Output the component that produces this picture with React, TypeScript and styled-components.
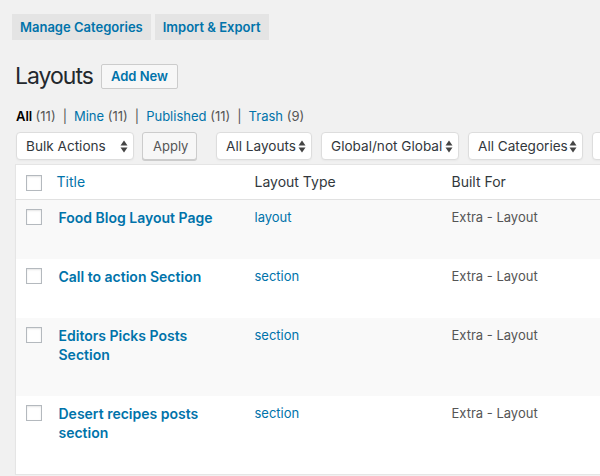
import React from 'react'
import styled, { createGlobalStyle } from 'styled-components'

const GlobalStyle = createGlobalStyle`
    html, body {
        margin: 0;
        padding: 0;
        background: #f1f1f1;
        overflow: hidden;
    }
    body {
        font-family: Inter, "Noto Sans", "Liberation Sans", sans-serif;
        color: #444;
        font-size: 13px;
        -webkit-font-smoothing: antialiased;
    }
`

const tabs = ['Manage Categories', 'Import & Export']

const statusLinks = [
    { label: 'All', count: 11, current: true },
    { label: 'Mine', count: 11 },
    { label: 'Published', count: 11 },
    { label: 'Trash', count: 9 },
]

// last filter runs off the right edge, only its border shows
const filters = [
    { label: 'All Layouts', width: 96 },
    { label: 'Global/not Global', width: 138 },
    { label: 'All Categories', width: 115 },
    { label: '', width: 100 },
]

const layouts = [
    { title: 'Food Blog Layout Page', type: 'layout', builtFor: 'Extra - Layout' },
    { title: 'Call to action Section', type: 'section', builtFor: 'Extra - Layout' },
    { title: 'Editors Picks Posts Section', type: 'section', builtFor: 'Extra - Layout' },
    { title: 'Desert recipes posts section', type: 'section', builtFor: 'Extra - Layout' },
]

function Arrows() {
    return (
        <svg width="8" height="13" viewBox="0 0 8 13">
            <path d="M4 0.5 L7.5 5.5 L0.5 5.5 Z" fill="#444" />
            <path d="M4 12.5 L7.5 7.5 L0.5 7.5 Z" fill="#444" />
        </svg>
    )
}

function App() {
    return (
        <>
            <GlobalStyle />
            <Wrap>
                <TabBar>
                    {tabs.map((t) => (
                        <Tab key={t}>{t}</Tab>
                    ))}
                </TabBar>

                <HeadingRow>
                    <Heading>Layouts</Heading>
                    <AddNew>Add New</AddNew>
                </HeadingRow>

                <Subsubsub>
                    {statusLinks.map((s, i) => (
                        <li key={s.label}>
                            <StatusLink $current={s.current}>
                                {s.label} <Count>({s.count})</Count>
                            </StatusLink>
                            {i < statusLinks.length - 1 && <Sep>|</Sep>}
                        </li>
                    ))}
                </Subsubsub>

                <Toolbar>
                    <ActionGroup $gap={8}>
                        <SelectBox $width={118}>
                            <span>Bulk Actions</span>
                            <Arrows />
                        </SelectBox>
                        <Button>Apply</Button>
                    </ActionGroup>
                    <ActionGroup $gap={9}>
                        {filters.map((f, i) => (
                            <SelectBox key={i} $width={f.width}>
                                <span>{f.label}</span>
                                <Arrows />
                            </SelectBox>
                        ))}
                    </ActionGroup>
                </Toolbar>

                <Table>
                    <colgroup>
                        <col style={{ width: 31 }} />
                        <col style={{ width: 198 }} />
                        <col style={{ width: 197 }} />
                        <col />
                    </colgroup>
                    <thead>
                        <tr>
                            <CheckCell as="td">
                                <Checkbox />
                            </CheckCell>
                            <Th $link>Title</Th>
                            <Th>Layout Type</Th>
                            <Th>Built For</Th>
                        </tr>
                    </thead>
                    <tbody>
                        {layouts.map((row, i) => (
                            <Row key={row.title} $alt={i % 2 === 0}>
                                <CheckCell>
                                    <Checkbox />
                                </CheckCell>
                                <Td>
                                    <RowTitle>{row.title}</RowTitle>
                                    <RowActions />
                                </Td>
                                <Td>
                                    <TypeLink>{row.type}</TypeLink>
                                </Td>
                                <Td>{row.builtFor}</Td>
                            </Row>
                        ))}
                    </tbody>
                </Table>
            </Wrap>
        </>
    )
}

export default App

const Wrap = styled.div`
    padding: 14px 0 0 15px;
    width: 900px;
`

const TabBar = styled.div`
    display: flex;
    gap: 4px;
    margin-left: -3px;
`

const Tab = styled.a`
    display: block;
    height: 26px;
    line-height: 26px;
    padding: 0 8px;
    background: #e4e4e4;
    color: #0073aa;
    font-weight: 600;
    font-size: 13px;
`

const HeadingRow = styled.div`
    display: flex;
    align-items: center;
    gap: 8px;
    margin-top: 24px;
    height: 25px;
`

const Heading = styled.h1`
    margin: 0;
    font-size: 23px;
    font-weight: 400;
    letter-spacing: -1px;
    color: #23282d;
    line-height: 29px;
`

const AddNew = styled.a`
    display: block;
    box-sizing: border-box;
    height: 25px;
    line-height: 23px;
    padding: 0 9px;
    border: 1px solid #ccc;
    border-radius: 2px;
    background: #f7f7f7;
    color: #0073aa;
    font-weight: 600;
    font-size: 13px;
`

const Subsubsub = styled.ul`
    display: flex;
    list-style: none;
    margin: 19px 0 0 1px;
    padding: 0;
    font-size: 13px;
    line-height: 16px;
    color: #666;
`

const StatusLink = styled.a<{ $current?: boolean }>`
    color: ${({ $current }) => ($current ? '#000' : '#0073aa')};
    font-weight: ${({ $current }) => ($current ? 600 : 400)};
`

const Count = styled.span`
    color: #555;
    font-weight: 400;
`

const Sep = styled.span`
    color: #555;
    padding: 0 7px;
`

const Toolbar = styled.div`
    display: flex;
    gap: 19px;
    margin: 8px 0 0 1px;
    height: 28px;
`

const ActionGroup = styled.div<{ $gap: number }>`
    display: flex;
    gap: ${({ $gap }) => $gap}px;
`

const SelectBox = styled.div<{ $width: number }>`
    box-sizing: border-box;
    width: ${({ $width }) => $width}px;
    height: 28px;
    display: flex;
    align-items: center;
    justify-content: space-between;
    padding: 0 5px 0 9px;
    background: #fff;
    border: 1px solid #ddd;
    border-radius: 4px;
    box-shadow: 0 1px 2px rgba(0, 0, 0, 0.04);
    color: #32373c;
    font-size: 13.6px;
    white-space: nowrap;
    overflow: hidden;
`

const Button = styled.button`
    box-sizing: border-box;
    height: 28px;
    width: 55px;
    padding: 0 10px;
    background: #f7f7f7;
    border: 1px solid #ccc;
    border-radius: 3px;
    box-shadow: 0 1px 0 #ccc;
    color: #555;
    font-family: inherit;
    font-size: 13px;
`

const Table = styled.table`
    margin-top: 4px;
    width: 820px;
    border-collapse: collapse;
    table-layout: fixed;
    background: #fff;
    border: 1px solid #e5e5e5;
    box-shadow: 0 1px 1px rgba(0, 0, 0, 0.04);
`

const Th = styled.th<{ $link?: boolean }>`
    text-align: left;
    font-weight: 400;
    font-size: 14px;
    line-height: 18px;
    padding: 8px 10px;
    color: ${({ $link }) => ($link ? '#0073aa' : '#32373c')};
    border-bottom: 1px solid #e1e1e1;
`

const CheckCell = styled.td`
    vertical-align: top;
    padding: 9px 0 0 10px;
    border-bottom: 1px solid #e1e1e1;
    thead & {
        padding: 10px 0 7px 10px;
    }
`

const Checkbox = styled.span`
    display: block;
    box-sizing: border-box;
    width: 16px;
    height: 16px;
    border: 1px solid #b4b9be;
    background: #fff;
    box-shadow: inset 0 1px 2px rgba(0, 0, 0, 0.1);
`

const Row = styled.tr<{ $alt: boolean }>`
    background: ${({ $alt }) => ($alt ? '#f9f9f9' : '#fff')};
    & > td {
        border-bottom: none;
    }
`

const Td = styled.td`
    vertical-align: top;
    padding: 8px 10px;
    font-size: 13px;
    line-height: 19px;
    color: #555;
`

const RowTitle = styled.a`
    display: block;
    padding-left: 2px;
    color: #0073aa;
    font-weight: 600;
    font-size: 14px;
    line-height: 19px;
`

const RowActions = styled.div`
    height: 24px;
`

const TypeLink = styled.a`
    color: #0073aa;
`
